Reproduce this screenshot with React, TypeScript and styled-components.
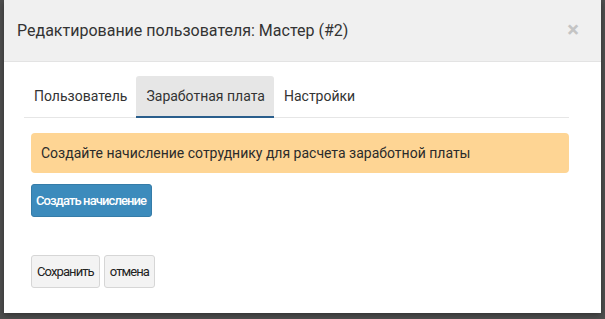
import styled, { createGlobalStyle } from "styled-components";

const GlobalStyle = createGlobalStyle`
	html, body {
		margin: 0;
		padding: 0;
		background: #4f4f4f;
		font-family: Roboto, "Liberation Sans", sans-serif;
	}
	#root {
		height: 319px;
	}
`;

const Backdrop = styled.div`
	height: 319px;
	padding: 0 4px 6px 4px;
	box-sizing: border-box;
`;

const Modal = styled.div`
	background: #fff;
	height: 313px;
	box-shadow: 0 2px 6px rgba(0, 0, 0, 0.4);
	display: flex;
	flex-direction: column;
`;

const Header = styled.div`
	display: flex;
	align-items: center;
	justify-content: space-between;
	height: 62px;
	padding: 0 22px 0 13px;
	background: #f0f0f0;
	border-bottom: 1px solid #e3e3e3;
	box-sizing: border-box;
`;

const Title = styled.h4`
	margin: 0;
	font-size: 16px;
	font-weight: 400;
	color: #333;
`;

const Close = styled.span`
	font-size: 22px;
	font-weight: 700;
	color: #c4c4c4;
	line-height: 1;
	margin-top: -2px;
`;

const Body = styled.div`
	padding: 14px 32px 0 20px;
`;

const TabList = styled.div`
	display: flex;
	border-bottom: 1px solid #e6e6e6;
`;

const Tab = styled.div<{ $active?: boolean }>`
	padding: 0 9px 0 10px;
	display: flex;
	align-items: center;
	font-size: 14px;
	color: #333;
	background: ${(p) => (p.$active ? "#e6e6e6" : "transparent")};
	border-bottom: 2px solid ${(p) => (p.$active ? "#2a5e8c" : "transparent")};
	border-radius: 3px 3px 0 0;
	box-sizing: border-box;
	height: 42px;
	margin-bottom: -1px;
`;

const Content = styled.div`
	padding: 15px 0 0 7px;
	display: flex;
	flex-direction: column;
	align-items: flex-start;
`;

const Alert = styled.div`
	align-self: stretch;
	background: #fed594;
	border-radius: 4px;
	height: 40px;
	display: flex;
	align-items: center;
	padding: 0 10px;
	font-size: 14px;
	color: #2b2b2b;
`;

const PrimaryButton = styled.button`
	margin-top: 11px;
	background: #3c8bbc;
	color: #fff;
	border: 1px solid #357ca8;
	border-radius: 3px;
	height: 33px;
	padding: 0 5px 0 4px;
	font-family: Roboto, "Liberation Sans", sans-serif;
	font-size: 13px;
	font-weight: 500;
	letter-spacing: -0.9px;
`;

const Footer = styled.div`
	display: flex;
	gap: 4px;
	margin-top: 38px;
`;

const Button = styled.button`
	background: #f3f3f3;
	color: #222;
	border: 1px solid #d6d6d6;
	border-radius: 3px;
	height: 33px;
	padding: 0 5px;
	font-family: Roboto, "Liberation Sans", sans-serif;
	font-size: 13px;
	letter-spacing: -0.9px;
`;

export default function App() {
	return (
		<>
			<GlobalStyle />
			<Backdrop>
				<Modal>
					<Header>
						<Title>Редактирование пользователя: Мастер (#2)</Title>
						<Close>×</Close>
					</Header>
					<Body>
						<TabList>
							<Tab>Пользователь</Tab>
							<Tab $active>Заработная плата</Tab>
							<Tab>Настройки</Tab>
						</TabList>
						<Content>
							<Alert>Создайте начисление сотруднику для расчета заработной платы</Alert>
							<PrimaryButton>Создать начисление</PrimaryButton>
							<Footer>
								<Button>Сохранить</Button>
								<Button>отмена</Button>
							</Footer>
						</Content>
					</Body>
				</Modal>
			</Backdrop>
		</>
	);
}
